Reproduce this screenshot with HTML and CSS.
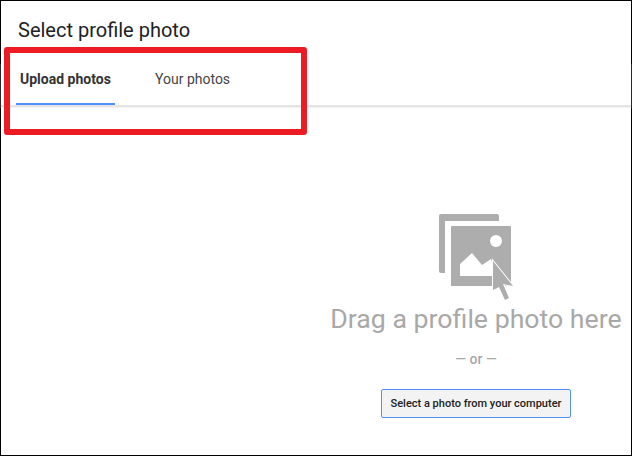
FILE: index.html
```html
<!DOCTYPE html>
<html lang="en">
<head>
    <meta charset="UTF-8">
    <meta name="viewport" content="width=device-width, initial-scale=1.0">
    <title>Select profile photo</title>
    <link rel="stylesheet" href="styles.css">
</head>
<body>
    <div class="dialog">
        <h1 class="title">Select profile photo</h1>
        <div class="tabs">
            <div class="tab active">Upload photos</div>
            <div class="tab">Your photos</div>
        </div>
        <div class="drop-zone">
            <svg class="drop-icon" width="80" height="90" viewBox="0 0 80 90">
                <path d="M5 1H61a2 2 0 0 1 2 2V8H9V60H5a2 2 0 0 1-2-2V3a2 2 0 0 1 2-2Z" fill="#adadad"/>
                <path d="M16 13H74a1 1 0 0 1 1 1V73H15V14a1 1 0 0 1 1-1Z" fill="#adadad"/>
                <circle cx="60" cy="28" r="6" fill="#fff"/>
                <path d="M24 63V51L36 40L46 52L55 46L60 63Z" fill="#fff"/>
                <path d="M57 48L77 73L67 71L73 85L69 87L63 74L57 77Z" fill="#adadad" stroke="#fff" stroke-width="2" paint-order="stroke"/>
            </svg>
            <div class="drop-text">Drag a profile photo here</div>
            <div class="or-text">— or —</div>
            <button class="select-button">Select a photo from your computer</button>
        </div>
        <div class="highlight"></div>
    </div>
</body>
</html>
```

FILE: styles.css
```css
* {
    margin: 0;
    padding: 0;
    box-sizing: border-box;
}

body, html {
    height: 100%;
    font-family: Roboto, Arial, sans-serif;
    overflow: hidden;
    background-color: #fff;
}

.dialog {
    position: relative;
    height: 456px;
    border: 1px solid #000;
    display: flex;
    flex-direction: column;
}

.title {
    font-size: 20px;
    font-weight: 400;
    line-height: 24px;
    color: #202124;
    padding: 17px 0 0 17px;
}

.tabs {
    display: flex;
    margin-top: 21px;
    padding-left: 15px;
    height: 44px;
    border-bottom: 2px solid #e4e4e4;
    box-shadow: 0 1px 1px #f2f2f2;
}

.tab {
    font-size: 14px;
    line-height: 20px;
    color: #444;
    padding: 6px 4px 0;
    margin-right: 32px;
}

.tab.active {
    font-weight: 700;
    color: #333;
    width: 99px;
    height: 42px;
    border-bottom: 2px solid #4d90fe;
    margin-right: 36px;
}

.drop-zone {
    flex: 1;
    display: flex;
    flex-direction: column;
    align-items: center;
    padding-left: 320px;
    padding-top: 106px;
}

.drop-text {
    font-size: 26.7px;
    line-height: 32px;
    color: #a8a8a8;
    white-space: nowrap;
}

.or-text {
    font-size: 14px;
    font-weight: 500;
    line-height: 16px;
    color: #a8a8a8;
    margin-top: 16px;
}

.select-button {
    font-family: Roboto, Arial, sans-serif;
    font-size: 11px;
    font-weight: 500;
    color: #222;
    width: 190px;
    height: 29px;
    margin-top: 22px;
    background-color: #f3f3f3;
    border: 1px solid #4d90fe;
    border-radius: 2px;
}

.highlight {
    position: absolute;
    left: 3px;
    top: 46px;
    width: 303px;
    height: 88px;
    border: 6px solid #ed1c24;
    border-radius: 3px;
}
```
